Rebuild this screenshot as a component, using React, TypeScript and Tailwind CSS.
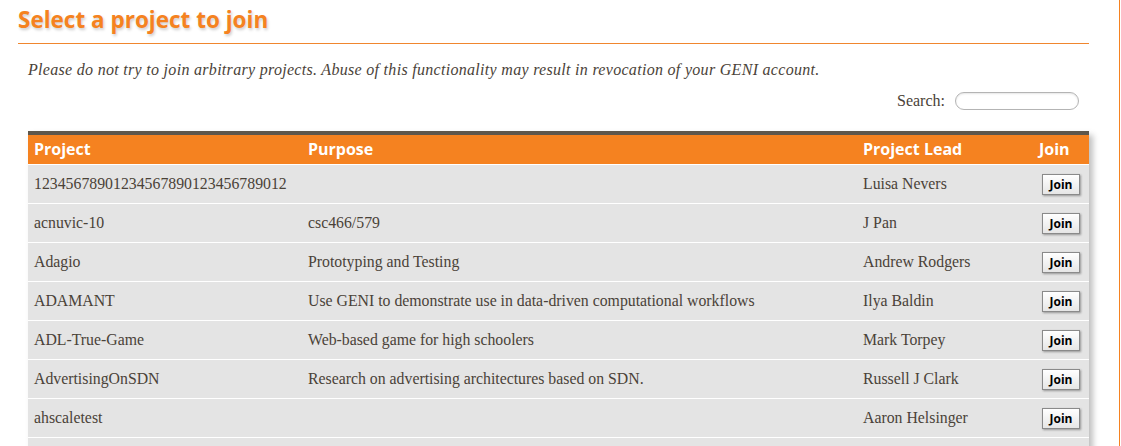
const rows = [
  { project: '12345678901234567890123456789012', purpose: '', lead: 'Luisa Nevers' },
  { project: 'acnuvic-10', purpose: 'csc466/579', lead: 'J Pan' },
  { project: 'Adagio', purpose: 'Prototyping and Testing', lead: 'Andrew Rodgers' },
  { project: 'ADAMANT', purpose: 'Use GENI to demonstrate use in data-driven computational workflows', lead: 'Ilya Baldin' },
  { project: 'ADL-True-Game', purpose: 'Web-based game for high schoolers', lead: 'Mark Torpey' },
  { project: 'AdvertisingOnSDN', purpose: 'Research on advertising architectures based on SDN.', lead: 'Russell J Clark' },
  { project: 'ahscaletest', purpose: '', lead: 'Aaron Helsinger' },
]

const serif = "font-['Liberation_Serif',serif]"

function JoinButton() {
  return (
    <button className="h-[21px] w-[38px] border border-[#8a8a8a] bg-gradient-to-b from-white to-[#e6e6e6] text-[12px] font-bold leading-none text-black shadow-[1px_1px_2px_rgba(0,0,0,0.35)] font-['Open_Sans',sans-serif]">
      Join
    </button>
  )
}

export default function App() {
  return (
    <div className="h-[446px] w-[1121px] overflow-hidden bg-white">
      <div className="h-full w-[1120px] border-r border-[#f58220] pl-[18px] pr-[30px]">
        <h1 className="pt-[5px] text-[22.5px] font-bold leading-[30px] text-[#f58220] [text-shadow:1px_2px_3px_rgba(0,0,0,0.2)] font-['Open_Sans',sans-serif]">
          Select a project to join
        </h1>
        <div className="mt-[8px] h-px bg-[#f0862e]" />
        <div className="pl-[10px]">
          <p className={`mt-[16px] text-[16px] italic leading-[20px] tracking-[0.3px] text-[#4a4238] ${serif}`}>
            Please do not try to join arbitrary projects. Abuse of this functionality may result in revocation of your GENI account.
          </p>
          <div className="mt-[9px] flex items-center justify-end gap-[10px] pr-[10px]">
            <span className={`text-[16px] text-[#4a4238] ${serif}`}>Search:</span>
            <input className="h-[18px] w-[124px] rounded-full border border-[#b4b4b4] bg-white shadow-[inset_0_1px_2px_rgba(0,0,0,0.1)]" />
          </div>
          <div className="mt-[18px] shadow-[4px_4px_6px_rgba(0,0,0,0.25)]">
            <table className="w-[1061px] table-fixed border-collapse">
              <colgroup>
                <col className="w-[274px]" />
                <col className="w-[555px]" />
                <col className="w-[176px]" />
                <col className="w-[56px]" />
              </colgroup>
              <thead>
                <tr className="h-[31px] border-t-4 border-[#5e574c] bg-[#f58220] text-left text-[16px] font-bold text-white font-['Open_Sans',sans-serif]">
                  <th className="px-[6px]">Project</th>
                  <th className="px-[6px]">Purpose</th>
                  <th className="px-[6px]">Project Lead</th>
                  <th className="px-[6px]">Join</th>
                </tr>
              </thead>
              <tbody>
                {rows.map((r) => (
                  <tr key={r.project} className={`h-[39px] border-t border-white bg-[#e4e4e4] text-[15.8px] text-[#4a4238] ${serif}`}>
                    <td className="px-[6px]">{r.project}</td>
                    <td className="px-[6px]">{r.purpose}</td>
                    <td className="px-[6px]">{r.lead}</td>
                    <td className="pl-[9px]">
                      <JoinButton />
                    </td>
                  </tr>
                ))}
                <tr className="h-[39px] border-t border-white bg-[#e4e4e4]">
                  <td colSpan={4} />
                </tr>
              </tbody>
            </table>
          </div>
        </div>
      </div>
    </div>
  )
}
